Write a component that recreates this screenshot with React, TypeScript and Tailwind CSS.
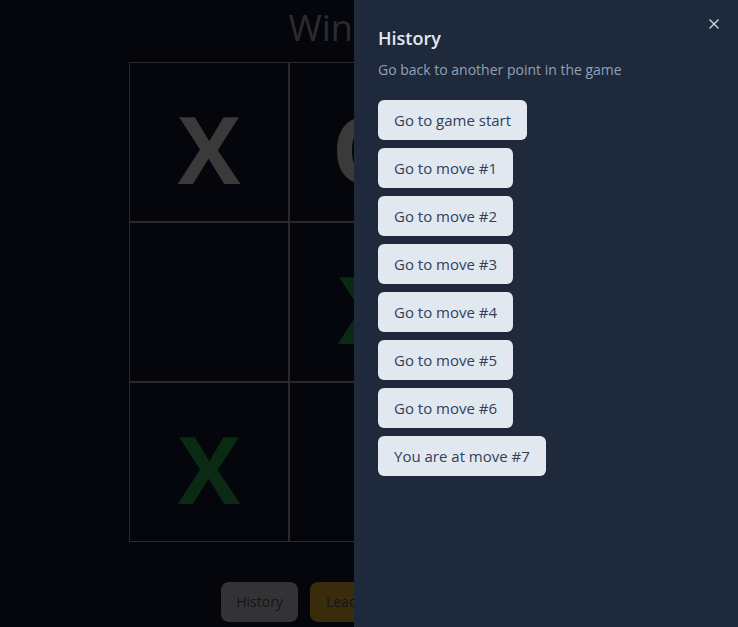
import React, { useState } from 'react';

type Cell = { mark: 'X' | 'O' | null; win?: boolean };

const board: Cell[] = [
    { mark: 'X' },
    { mark: 'O' },
    { mark: 'X', win: true },
    { mark: null },
    { mark: 'X', win: true },
    { mark: 'O' },
    { mark: 'X', win: true },
    { mark: null },
    { mark: 'O' },
];

const moves = [
    'Go to game start',
    'Go to move #1',
    'Go to move #2',
    'Go to move #3',
    'Go to move #4',
    'Go to move #5',
    'Go to move #6',
    'You are at move #7',
];

const App: React.FC = () => {
    const [open, setOpen] = useState(true);

    return (
        <div
            className="relative h-[627px] w-full overflow-hidden bg-[#05060b]"
            style={{ fontFamily: '"Open Sans", "Noto Sans", sans-serif' }}
        >
            {/* game, dimmed behind the sheet */}
            <div className="flex flex-col items-center pt-2">
                <h1 className="text-4xl leading-10 text-[#2b2b30]">Winner: X</h1>
                <div className="mt-[14px] grid grid-cols-3">
                    {board.map((cell, i) => (
                        <div
                            key={i}
                            className="flex h-[160px] w-[160px] items-center justify-center border border-[#2a2a2e]"
                        >
                            {cell.mark && (
                                <span
                                    className={`mt-3 text-[94px] font-bold leading-none ${
                                        cell.win ? 'text-[#0b2a14]' : 'text-[#3a3a3a]'
                                    }`}
                                >
                                    {cell.mark}
                                </span>
                            )}
                        </div>
                    ))}
                </div>
                <div className="mt-10 flex gap-3">
                    <button className="h-10 rounded-lg bg-[#333335] px-[15px] text-sm text-[#151517]">History</button>
                    <button className="h-10 rounded-lg bg-[#3a2c0a] px-4 text-sm text-[#151517]">Leaderboard</button>
                    <button className="h-10 rounded-lg bg-[#333335] px-4 text-sm text-[#151517]">Restart</button>
                </div>
            </div>

            {open && (
                <div className="absolute inset-y-0 right-0 w-96 bg-[#1e293b] p-6">
                    <button
                        onClick={() => setOpen(false)}
                        className="absolute right-4 top-4 text-slate-300"
                    >
                        <svg width="16" height="16" viewBox="0 0 16 16" fill="none" stroke="currentColor" strokeWidth="1.4">
                            <path d="M3.5 3.5l9 9M12.5 3.5l-9 9" />
                        </svg>
                    </button>
                    <h2 className="text-lg font-semibold leading-7 text-slate-200">History</h2>
                    <p className="mt-2 text-sm leading-5 text-slate-400">Go back to another point in the game</p>
                    <div className="mt-5 flex flex-col items-start gap-2">
                        {moves.map((m) => (
                            <button
                                key={m}
                                className="h-10 rounded-md bg-slate-200 px-4 text-[15px] text-slate-700"
                            >
                                {m}
                            </button>
                        ))}
                    </div>
                </div>
            )}
        </div>
    );
};

export default App;
